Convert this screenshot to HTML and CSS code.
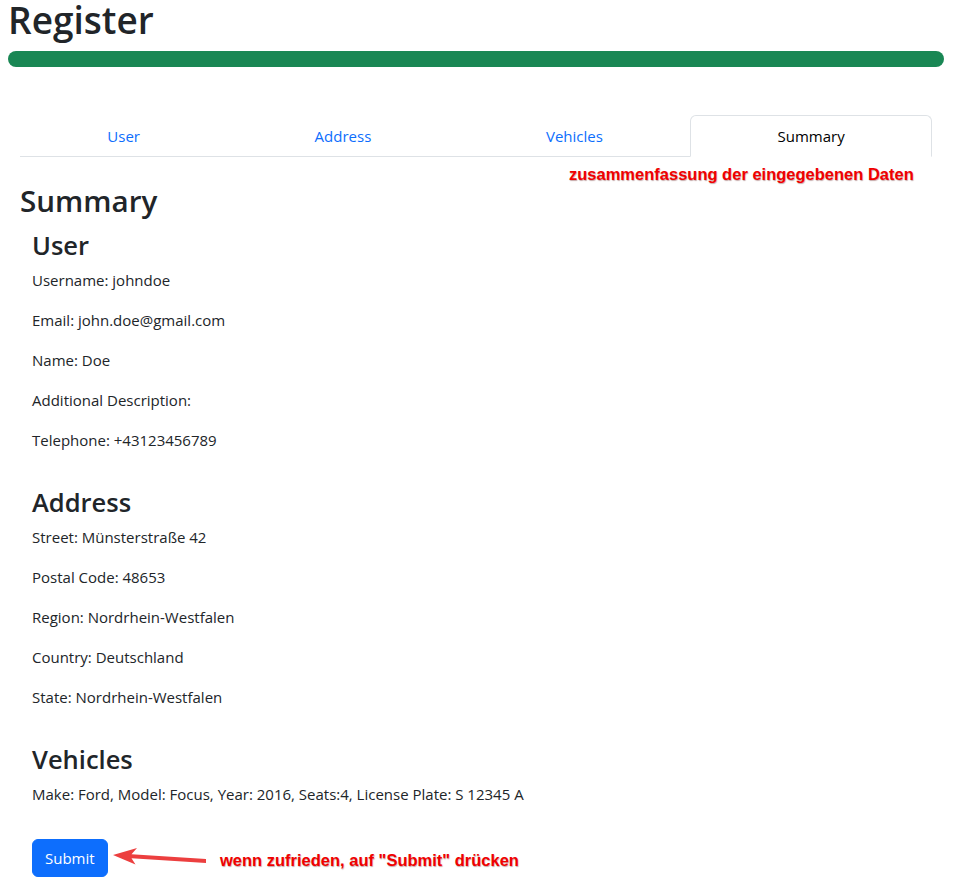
FILE: index.html
```html
<!DOCTYPE html>
<html lang="de">
<head>
<meta charset="utf-8">
<title>Register</title>
<link rel="stylesheet" href="styles.css">
</head>
<body>
  <h1 class="page-title">Register</h1>
  <div class="progress"><div class="progress-bar"></div></div>

  <div class="container">
    <ul class="nav-tabs">
      <li class="nav-item"><a class="nav-link" href="#">User</a></li>
      <li class="nav-item"><a class="nav-link" href="#">Address</a></li>
      <li class="nav-item"><a class="nav-link" href="#">Vehicles</a></li>
      <li class="nav-item"><a class="nav-link active" href="#">Summary</a></li>
    </ul>

    <div class="tab-content">
      <h2 class="summary-title">Summary</h2>
      <div class="summary-body">
        <section class="section">
          <h3 class="section-title">User</h3>
          <p>Username: johndoe</p>
          <p>Email: john.doe@gmail.com</p>
          <p>Name: Doe</p>
          <p>Additional Description:</p>
          <p>Telephone: +43123456789</p>
        </section>
        <section class="section">
          <h3 class="section-title">Address</h3>
          <p>Street: Münsterstraße 42</p>
          <p>Postal Code: 48653</p>
          <p>Region: Nordrhein-Westfalen</p>
          <p>Country: Deutschland</p>
          <p>State: Nordrhein-Westfalen</p>
        </section>
        <section class="section">
          <h3 class="section-title">Vehicles</h3>
          <p>Make: Ford, Model: Focus, Year: 2016, Seats:4, License Plate: S 12345 A</p>
        </section>
        <div class="actions">
          <button class="btn-primary" type="button">Submit</button>
        </div>
      </div>
    </div>
  </div>

  <div class="note note-top">zusammenfassung der eingegebenen Daten</div>
  <svg class="note-arrow" width="115" height="30" viewBox="0 0 115 30" aria-hidden="true">
    <polygon points="13,15 37,8 31.5,14.2 106,19 106,23 31.5,18.3 35.5,24.5" fill="#ec3f3f"/>
  </svg>
  <div class="note note-bottom">wenn zufrieden, auf "Submit" drücken</div>
</body>
</html>
```

FILE: styles.css
```css
* {
  box-sizing: border-box;
}

html, body {
  background: #fff;
}

body {
  margin: 0;
  padding: 0 16px 0 8px;
  position: relative;
  min-height: 885px;
  font-family: "Open Sans", "Noto Sans", sans-serif;
  font-size: 15px;
  line-height: 24px;
  color: #212529;
}

.page-title {
  margin: 0 0 11px;
  font-size: 37px;
  line-height: 40px;
  font-weight: 600;
  color: #212529;
}

.progress {
  height: 16px;
  border-radius: 8px;
  background: #e9ecef;
  overflow: hidden;
}

.progress-bar {
  width: 100%;
  height: 100%;
  background: #198754;
}

.container {
  padding: 0 12px;
  margin-top: 48px;
}

.nav-tabs {
  display: flex;
  list-style: none;
  margin: 0;
  padding: 0;
  border-bottom: 1px solid #dee2e6;
}

.nav-item {
  flex: 1 1 auto;
  text-align: center;
}

.nav-link {
  display: block;
  padding: 8px 16px;
  margin-bottom: -1px;
  border: 1px solid transparent;
  border-top-left-radius: 6px;
  border-top-right-radius: 6px;
  color: #0d6efd;
  text-decoration: none;
  font-size: 15px;
  line-height: 24px;
}

.nav-link.active {
  color: #000;
  background: #fff;
  border-color: #dee2e6 #dee2e6 #fff;
}

.tab-content {
  padding-top: 26px;
}

.summary-title {
  margin: 0 0 10px;
  font-size: 29.6px;
  line-height: 36px;
  font-weight: 600;
}

.summary-body {
  padding-left: 12px;
}

.section {
  padding-bottom: 18px;
}

.section:last-of-type {
  padding-bottom: 17px;
}

.section-title {
  margin: 0 0 7px;
  font-size: 25.5px;
  line-height: 32px;
  font-weight: 600;
}

.section p {
  margin: 0 0 16px;
}

.btn-primary {
  display: inline-block;
  padding: 6px 12px;
  border: 1px solid #0d6efd;
  border-radius: 6px;
  background: #0d6efd;
  color: #fff;
  font-family: inherit;
  font-size: 15px;
  line-height: 24px;
  cursor: pointer;
}

.note {
  position: absolute;
  font-family: "Liberation Sans", Arial, sans-serif;
  font-weight: 700;
  font-size: 16.5px;
  line-height: 16.5px;
  color: #f00000;
  text-shadow: 0.5px 0.5px 1px rgba(90, 0, 0, 0.35);
  white-space: nowrap;
}

.note-top {
  left: 569px;
  top: 166px;
}

.note-bottom {
  left: 220px;
  top: 852px;
}

.note-arrow {
  position: absolute;
  left: 100px;
  top: 840px;
}
```
